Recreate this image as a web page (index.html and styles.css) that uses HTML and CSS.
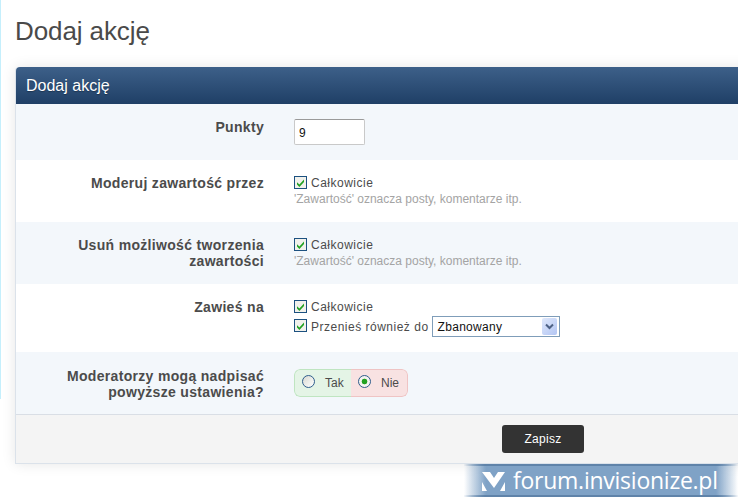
FILE: index.html
```html
<!DOCTYPE html>
<html lang="pl">
<head>
<meta charset="utf-8">
<title>Dodaj akcję</title>
<link rel="stylesheet" href="styles.css">
</head>
<body>
<svg class="defs" width="0" height="0" aria-hidden="true">
  <symbol id="check" viewBox="0 0 13 13">
    <rect x=".5" y=".5" width="12" height="12" fill="#f1f1ec" stroke="#1c5180"/>
    <path d="M3 6.2 5.400 8.600 10 3.600v2.500L5.400 11 3 8.600z" fill="#21a121"/>
  </symbol>
</svg>
<main class="page">
  <h1 class="title">Dodaj akcję</h1>
  <section class="card">
    <h2 class="card-head">Dodaj akcję</h2>
    <div class="row row-alt row-points">
      <div class="label">Punkty</div>
      <div class="value"><input class="points" type="text" value="9"></div>
    </div>
    <div class="row row-std">
      <div class="label">Moderuj zawartość przez</div>
      <div class="value">
        <div class="opt"><svg class="cb"><use href="#check"/></svg>Całkowicie</div>
        <div class="hint">'Zawartość' oznacza posty, komentarze itp.</div>
      </div>
    </div>
    <div class="row row-alt row-std">
      <div class="label">Usuń możliwość tworzenia zawartości</div>
      <div class="value">
        <div class="opt"><svg class="cb"><use href="#check"/></svg>Całkowicie</div>
        <div class="hint">'Zawartość' oznacza posty, komentarze itp.</div>
      </div>
    </div>
    <div class="row row-ban">
      <div class="label">Zawieś na</div>
      <div class="value">
        <div class="opt"><svg class="cb"><use href="#check"/></svg>Całkowicie</div>
        <div class="opt opt-move"><svg class="cb"><use href="#check"/></svg><span>Przenieś również do</span><span class="select">Zbanowany<span class="select-btn"><svg width="9" height="7" viewBox="0 0 9 7"><path d="M1 1.500 4.500 5 8 1.500" fill="none" stroke="#4d6185" stroke-width="2"/></svg></span></span></div>
      </div>
    </div>
    <div class="row row-alt row-yn">
      <div class="label">Moderatorzy mogą nadpisać powyższe ustawienia?</div>
      <div class="value">
        <div class="yn">
          <div class="yn-part yn-yes"><span class="radio"></span>Tak</div>
          <div class="yn-part yn-no"><span class="radio radio-on"></span>Nie</div>
        </div>
      </div>
    </div>
    <div class="foot"><button class="save" type="button">Zapisz</button></div>
  </section>
</main>
<div class="stamp">
  <svg class="stamp-logo" width="24" height="21" viewBox="0 0 24 21"><path d="M0 1h8l4 6 4-6h7L12 17z" fill="#fff"/><path d="M0 11l5 9H0zM23 11l-5 9h5z" fill="#fff"/></svg>
  <span>forum.invisionize.pl</span>
</div>
</body>
</html>
```

FILE: styles.css
```css
html, body { margin: 0; padding: 0; height: 498px; overflow: hidden; background: #fff; }
body { position: relative; font-family: "Liberation Sans", Arial, sans-serif; color: #444; }
.defs { position: absolute; }
.page { width: 800px; height: 399px; padding: 0 0 0 15px; box-sizing: border-box; border-left: 1px solid #c5effc; }
.title { margin: 0 0 0 -1px; padding-top: 16px; height: 67px; box-sizing: border-box; font-weight: 400; font-size: 26px; line-height: 30px; letter-spacing: -.1px; color: #4a4a4a; }
.card {
  width: 780px; border: 1px solid #dbe2ea; border-top: 0; border-radius: 4px 0 0 0;
  box-shadow: 0 0 14px rgba(0,0,0,.1); background: #fff; margin-left: -1px;
}
.card-head {
  margin: 0; height: 37px; padding-left: 10px; font-weight: 400; font-size: 16px; line-height: 37px;
  color: #fff; background: linear-gradient(#3d6089, #1f3f66); border-radius: 4px 0 0 0; text-shadow: 0 1px 1px rgba(0,0,0,.3);
}
.row { display: flex; background: #fff; }
.row-alt { background: #f3f7fb; }
.row-points { height: 56px; padding-top: 15px; box-sizing: border-box; }
.row-std { height: 62px; padding-top: 15px; box-sizing: border-box; }
.row-ban { height: 68px; padding-top: 15px; box-sizing: border-box; }
.row-yn { height: 63px; padding-top: 15px; box-sizing: border-box; border-bottom: 1px solid #d9dee5; }
.row-yn .label { padding-top: 1px; }
.label { width: 248px; flex: none; padding-left: 50px; box-sizing: border-box; text-align: right; font-weight: 700; font-size: 14px; line-height: 16px; letter-spacing: .32px; color: #4b4b4b; }
.value { margin-left: 30px; font-size: 12px; color: #4b4b4b; }
.points { display: block; width: 71px; height: 26px; box-sizing: border-box; border: 1px solid #c9c9c9; border-top-color: #9a9a9a; border-radius: 2px; padding: 1px 4px 0; margin: 0; font: 12px "Liberation Sans", Arial, sans-serif; color: #111; background: #fff; }
.opt { display: flex; align-items: center; height: 16px; line-height: 16px; letter-spacing: .5px; }
.cb { width: 13px; height: 13px; margin: -2px 4px 0 0; flex: none; }
.hint { margin-top: 0; font-size: 12px; line-height: 16px; color: #a4a4a4; letter-spacing: 0; }
.opt-move { margin-top: 1px; height: 21px; }
.select { display: inline-flex; align-items: center; justify-content: space-between; width: 128px; height: 21px; box-sizing: border-box; margin-left: 3px; padding: 0 2px 0 5px; border: 1px solid #7f9db9; background: #fff; color: #111; letter-spacing: .3px; white-space: nowrap; }
.select-btn { display: flex; align-items: center; justify-content: center; width: 15px; height: 17px; background: linear-gradient(135deg, #dfe8fb, #b2c5f3); border-radius: 2px; }
.yn { display: flex; width: 114px; height: 28px; margin-top: 2px; border-radius: 6px; overflow: hidden; }
.yn-part { display: flex; align-items: center; box-sizing: border-box; height: 28px; border: 1px solid; line-height: 26px; }
.yn-yes { width: 57px; padding-left: 7px; background: #e4f4e6; border-color: #bfe5c1; border-right: 0; border-radius: 6px 0 0 6px; }
.yn-no { width: 57px; padding-left: 7px; background: #f8e2e2; border-color: #efc4c4; border-left: 0; border-radius: 0 6px 6px 0; }
.radio { display: inline-block; width: 13px; height: 13px; box-sizing: border-box; margin: -3px 10px 0 0; border: 1.500px solid #2f5d8c; border-radius: 50%; background: linear-gradient(135deg, #d9d9d2, #fff); flex: none; }
.radio-on { background: radial-gradient(circle, #21a121 0 2.500px, #f4f4ef 3.200px); }
.foot { height: 48px; background: #f4f4f4; padding: 10px 0 0 486px; box-sizing: border-box; }
.save { display: block; width: 82px; height: 28px; padding: 0; border: 0; border-radius: 3px; background: #333; color: #fff; font: 12px "Liberation Sans", Arial, sans-serif; letter-spacing: .3px; }
.stamp {
  position: absolute; left: 464px; top: 464px; width: 274px; height: 33px; box-sizing: border-box;
  display: flex; align-items: center; padding-left: 18px; gap: 7px; color: #fff;
  font-family: "Open Sans", "Noto Sans", sans-serif; font-size: 23px; line-height: 29px; letter-spacing: -.25px; white-space: nowrap;
  background: linear-gradient(90deg, rgba(127,162,198,0), #7fa2c6 22px, #7fa2c6 252px, rgba(127,162,198,0));
  border-top: 2px solid #6c8fb3; border-bottom: 2px solid #6c8fb3;
  border-image: linear-gradient(90deg, rgba(90,125,165,0), #5f83a9 22px, #5f83a9 252px, rgba(90,125,165,0)) 1;
}
.stamp-logo { flex: none; margin-top: 2px; }
```
